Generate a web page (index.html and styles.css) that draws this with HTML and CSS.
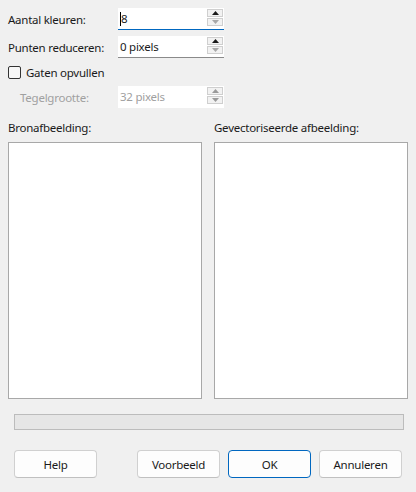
FILE: index.html
```html
<!DOCTYPE html>
<html lang="nl">
<head>
<meta charset="utf-8">
<link rel="stylesheet" href="styles.css">
</head>
<body>
<div class="dialog">
  <div class="row">
    <span class="label">Aantal kleuren:</span>
    <div class="field focused">
      <span class="value"><span class="caret"></span>8</span>
      <div class="spin">
        <span class="sbtn"><svg width="7" height="4" viewBox="0 0 7 4"><path d="M0 4L3.5 0L7 4Z" fill="#1a1a1a"/></svg></span>
        <span class="sbtn"><svg width="7" height="4" viewBox="0 0 7 4"><path d="M0 0L3.5 4L7 0Z" fill="#a8a8a8"/></svg></span>
      </div>
    </div>
  </div>
  <div class="row r-gap">
    <span class="label">Punten reduceren:</span>
    <div class="field">
      <span class="value">0 pixels</span>
      <div class="spin">
        <span class="sbtn"><svg width="7" height="4" viewBox="0 0 7 4"><path d="M0 4L3.5 0L7 4Z" fill="#1a1a1a"/></svg></span>
        <span class="sbtn"><svg width="7" height="4" viewBox="0 0 7 4"><path d="M0 0L3.5 4L7 0Z" fill="#a8a8a8"/></svg></span>
      </div>
    </div>
  </div>
  <div class="check-row">
    <span class="checkbox"></span>
    <span class="check-label">Gaten opvullen</span>
  </div>
  <div class="row r-gap disabled">
    <span class="label indent">Tegelgrootte:</span>
    <div class="field dis">
      <span class="value">32 pixels</span>
      <div class="spin">
        <span class="sbtn"><svg width="7" height="4" viewBox="0 0 7 4"><path d="M0 4L3.5 0L7 4Z" fill="#9a9a9a"/></svg></span>
        <span class="sbtn"><svg width="7" height="4" viewBox="0 0 7 4"><path d="M0 0L3.5 4L7 0Z" fill="#9a9a9a"/></svg></span>
      </div>
    </div>
  </div>
  <div class="panes">
    <div class="pane">
      <div class="pane-label">Bronafbeelding:</div>
      <div class="pane-box"></div>
    </div>
    <div class="pane">
      <div class="pane-label">Gevectoriseerde afbeelding:</div>
      <div class="pane-box"></div>
    </div>
  </div>
  <div class="progress"></div>
  <div class="buttons">
    <button class="btn">Help</button>
    <div class="btn-group">
      <button class="btn">Voorbeeld</button>
      <button class="btn default">OK</button>
      <button class="btn">Annuleren</button>
    </div>
  </div>
</div>
</body>
</html>
```

FILE: styles.css
```css
html, body {
  margin: 0;
  padding: 0;
  background: #f0f0f0;
}
body {
  font-family: "Noto Sans", "Open Sans", sans-serif;
  font-size: 11.5px;
  letter-spacing: -0.25px;
  color: #1a1a1a;
}
.dialog {
  width: 416px;
  height: 492px;
  box-sizing: border-box;
  padding: 8px 8px 0 8px;
  display: flex;
  flex-direction: column;
}
.row {
  display: flex;
  align-items: center;
  height: 22px;
}
.r-gap { margin-top: 6px; }
.label {
  width: 110px;
  flex: none;
}
.label.indent {
  padding-left: 12px;
  box-sizing: border-box;
}
.disabled .label { color: #a0a0a0; }
.field {
  width: 106px;
  height: 22px;
  box-sizing: border-box;
  background: #ffffff;
  border-bottom: 1px solid #8a8a8a;
  display: flex;
  align-items: center;
  justify-content: space-between;
}
.field.focused { border-bottom-color: #0067c0; }
.field.dis { border-bottom-color: #ffffff; color: #a0a0a0; }
.value {
  padding-left: 2px;
  display: flex;
  align-items: center;
}
.caret {
  display: inline-block;
  width: 1px;
  height: 14px;
  background: #000;
}
.spin {
  display: flex;
  flex-direction: column;
  gap: 1px;
  margin-right: 1px;
  align-self: flex-start;
  margin-top: 1px;
}
.sbtn {
  width: 16px;
  height: 8px;
  box-sizing: border-box;
  background: #f2f2f2;
  border: 1px solid #cfcfcf;
  display: flex;
  align-items: center;
  justify-content: center;
}
.check-row {
  display: flex;
  align-items: center;
  height: 16px;
  margin-top: 6px;
}
.checkbox {
  width: 13px;
  height: 13px;
  box-sizing: border-box;
  border: 1px solid #333;
  border-radius: 2px;
  background: #f7f7f7;
  margin-right: 5px;
}
.panes {
  display: flex;
  gap: 12px;
  margin-top: 12px;
}
.pane {
  width: 194px;
  display: flex;
  flex-direction: column;
}
.pane-label {
  height: 16px;
  line-height: 16px;
}
.pane-box {
  margin-top: 6px;
  height: 257px;
  box-sizing: border-box;
  background: #ffffff;
  border: 1px solid #a8a8a8;
}
.progress {
  margin: 15px 4px 0 6px;
  height: 16px;
  box-sizing: border-box;
  background: #e6e6e6;
  border: 1px solid #bcbcbc;
}
.buttons {
  display: flex;
  justify-content: space-between;
  margin: 20px 6px 0 6px;
}
.btn-group {
  display: flex;
  gap: 8px;
}
.btn {
  width: 83px;
  height: 28px;
  box-sizing: border-box;
  font-family: inherit;
  font-size: 11.5px;
  letter-spacing: -0.25px;
  color: #1a1a1a;
  background: #fdfdfd;
  border: 1px solid #d0d0d0;
  border-bottom-color: #c0c0c0;
  border-radius: 4px;
  padding: 0;
}
.btn.default {
  border: 1px solid #0067c0;
}
```
